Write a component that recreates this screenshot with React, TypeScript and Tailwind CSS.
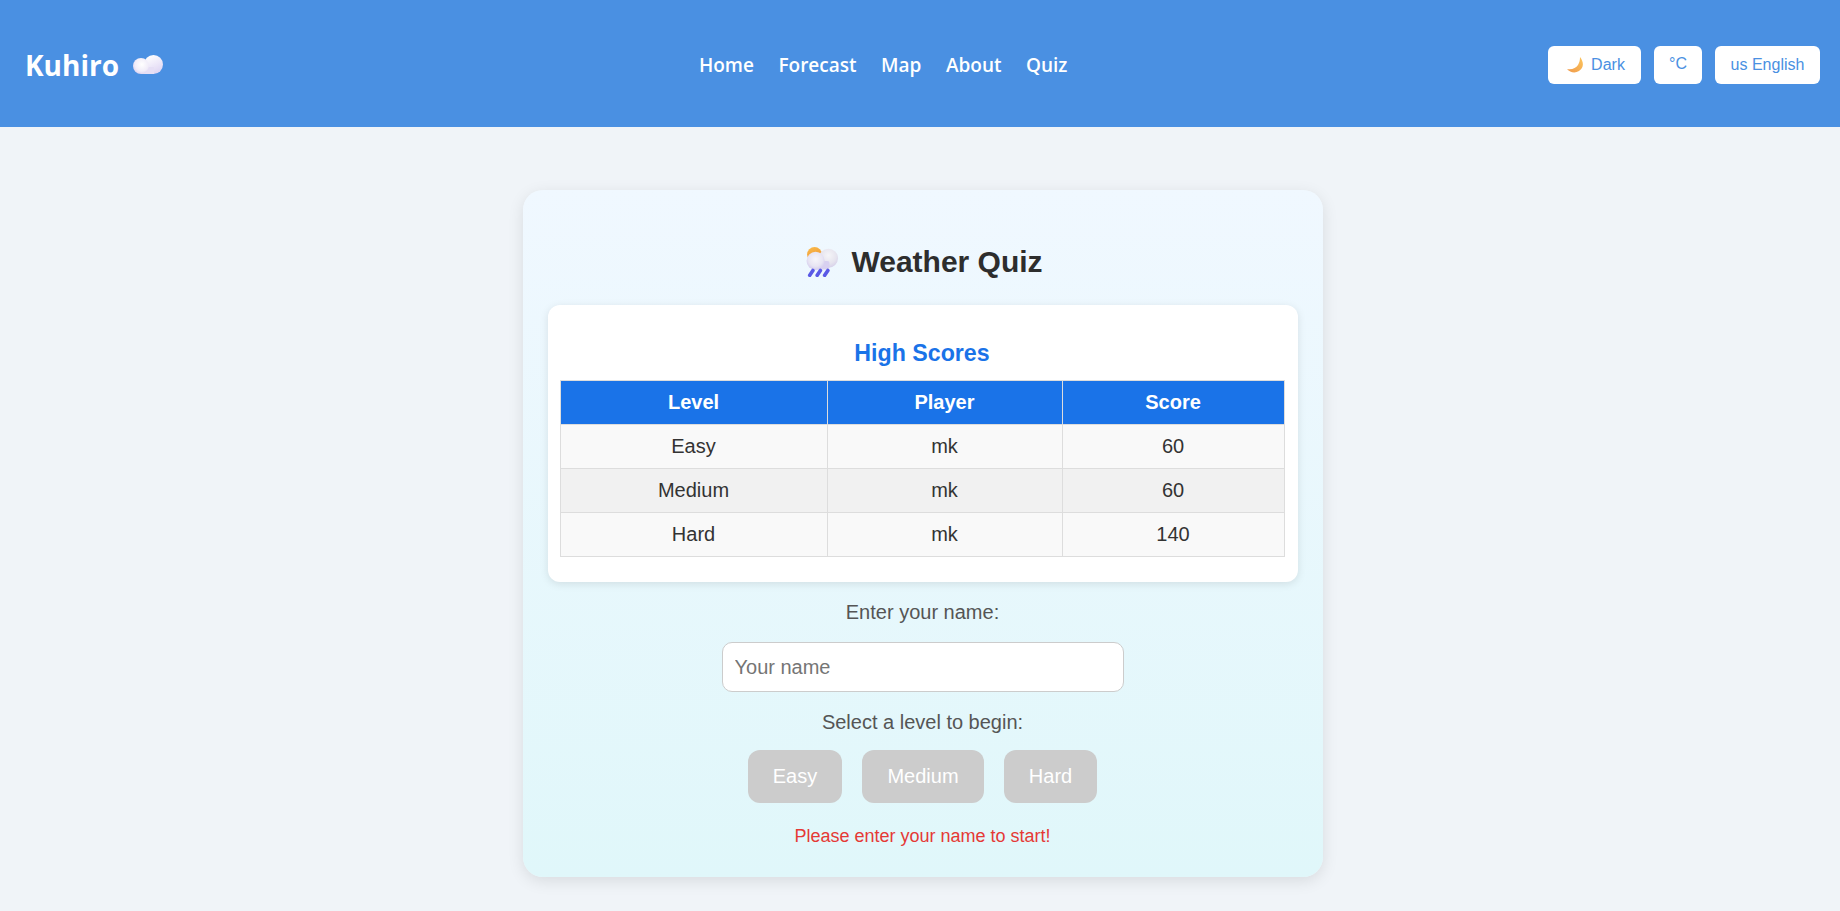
import React from "react";

function CloudLogo() {
  return (
    <svg width="30" height="19" viewBox="0 0 30 19" className="block">
      <defs>
        <radialGradient id="cl1" cx="0.55" cy="0.4" r="0.7">
          <stop offset="0" stopColor="#ffffff" />
          <stop offset="0.6" stopColor="#f1edf9" />
          <stop offset="1" stopColor="#d3c8ee" />
        </radialGradient>
        <linearGradient id="cl2" x1="0.3" y1="0" x2="0.8" y2="1">
          <stop offset="0" stopColor="#ffffff" />
          <stop offset="1" stopColor="#dcd2f2" />
        </linearGradient>
      </defs>
      <circle cx="20.5" cy="9.5" r="9.5" fill="url(#cl2)" />
      <rect x="8" y="12" width="13" height="7" fill="#e6dff5" />
      <circle cx="8" cy="11" r="8" fill="url(#cl1)" />
    </svg>
  );
}

function Moon() {
  return (
    <svg width="17" height="16" viewBox="0 0 17 16" className="block">
      <defs>
        <linearGradient id="mo" x1="1" y1="0" x2="0" y2="1">
          <stop offset="0" stopColor="#fcc55c" />
          <stop offset="1" stopColor="#f09a4c" />
        </linearGradient>
      </defs>
      <path d="M13 0 C17 5 17 11 12 14 C8 16.5 3 15.5 0 12 C5 13 9 11 11 8 C12.5 5.5 13 3 13 0 Z" fill="url(#mo)" />
    </svg>
  );
}

function RainCloud() {
  return (
    <svg width="32" height="30" viewBox="0 0 30 28" className="block">
      <defs>
        <linearGradient id="sun" x1="0.3" y1="0" x2="0.7" y2="1">
          <stop offset="0" stopColor="#f8b84a" />
          <stop offset="1" stopColor="#ef8f2c" />
        </linearGradient>
        <radialGradient id="c1" cx="0.5" cy="0.4" r="0.65">
          <stop offset="0" stopColor="#f6f5fa" />
          <stop offset="0.6" stopColor="#e8e5f3" />
          <stop offset="1" stopColor="#cfc6ec" />
        </radialGradient>
        <radialGradient id="c2" cx="0.5" cy="0.35" r="0.7">
          <stop offset="0" stopColor="#f5f5f8" />
          <stop offset="0.6" stopColor="#e6e4ee" />
          <stop offset="1" stopColor="#d2cbe8" />
        </radialGradient>
      </defs>
      <circle cx="8" cy="7" r="7" fill="url(#sun)" />
      <circle cx="21" cy="10.5" r="9" fill="url(#c2)" />
      <rect x="9" y="13" width="13" height="8" rx="2" fill="#d8d0f0" />
      <circle cx="9" cy="13" r="8.5" fill="url(#c1)" />
      <path d="M6.5 22 L3.5 26.5 M13.5 22 L10.5 26.5 M20.5 22 L17.5 26.5" stroke="#5a5ae6" strokeWidth="3.4" strokeLinecap="round" />
    </svg>
  );
}

const rows = [
  ["Easy", "mk", "60"],
  ["Medium", "mk", "60"],
  ["Hard", "mk", "140"],
];

export default function App() {
  return (
    <div className="min-h-[911px] bg-[#f0f4f8] font-['Liberation_Sans',Arial,sans-serif] overflow-hidden">
      <header className="h-[127px] bg-[#4a90e2] flex items-center pl-[25px] pr-[20px] pt-[2px]">
        <div className="flex items-center gap-[14px] text-white font-['Open_Sans',sans-serif] font-bold text-[28px] w-[674px] shrink-0">
          <span>Kuhiro</span>
          <CloudLogo />
        </div>
        <nav className="flex gap-[24.5px] text-white font-['Open_Sans',sans-serif] font-semibold text-[19px] pt-[2px]">
          <span>Home</span>
          <span>Forecast</span>
          <span>Map</span>
          <span>About</span>
          <span>Quiz</span>
        </nav>
        <div className="ml-auto flex items-center gap-[13px] text-[#4a90e2] text-[16px]">
          <button className="h-[38px] w-[93px] bg-white rounded-[6px] flex items-center justify-center gap-[7px] pl-[3px] pt-[1px]">
            <Moon />
            <span>Dark</span>
          </button>
          <button className="h-[38px] w-[48px] bg-white rounded-[6px] pb-[1px]">°C</button>
          <button className="h-[38px] w-[105px] bg-white rounded-[6px]">us English</button>
        </div>
      </header>

      <main className="flex justify-center pl-[5px] pt-[63px] pb-[34px]">
        <section className="w-[800px] h-[687px] rounded-[20px] bg-gradient-to-b from-[#f0f8ff] to-[#e0f7fa] shadow-[0_4px_16px_rgba(0,0,0,0.1)] px-[25px] pt-[53px] flex flex-col items-center">
          <h1 className="flex items-center justify-center gap-[13px] ml-[4px] text-[#2d2d2d] font-bold text-[30px] leading-[38px]">
            <RainCloud />
            <span>Weather Quiz</span>
          </h1>
          <div className="w-[750px] h-[277px] mt-[24px] bg-white rounded-[12px] shadow-[0_2px_8px_rgba(0,0,0,0.1)] pl-[12px] pr-[13px] pt-[35px] shrink-0">
            <h2 className="text-center text-[#1a73e8] font-bold text-[23.2px] leading-[26px]">High Scores</h2>
            <table className="mt-[14px] w-[725px] border-collapse table-fixed text-[20px] text-[#333333]">
              <colgroup>
                <col className="w-[267px]" />
                <col className="w-[235px]" />
                <col className="w-[222px]" />
              </colgroup>
              <thead>
                <tr className="h-[44px] bg-[#1a73e8] text-white font-bold">
                  <th className="border border-[#dddddd] pb-[2px]">Level</th>
                  <th className="border border-[#dddddd] pb-[2px]">Player</th>
                  <th className="border border-[#dddddd] pb-[2px]">Score</th>
                </tr>
              </thead>
              <tbody>
                {rows.map((r, i) => (
                  <tr key={i} className={i === 1 ? "h-[44px] bg-[#f1f1f1]" : "h-[44px] bg-[#f9f9f9]"}>
                    {r.map((c, j) => (
                      <td key={j} className="border border-[#dddddd] text-center pb-[2px]">{c}</td>
                    ))}
                  </tr>
                ))}
              </tbody>
            </table>
          </div>
          <p className="mt-[19px] text-[#555555] text-[20px] leading-[23px]">Enter your name:</p>
          <input
            placeholder="Your name"
            className="mt-[18px] w-[402px] h-[50px] shrink-0 bg-white border border-[#cccccc] rounded-[10px] px-[12px] text-[20px] placeholder:text-[#757575] outline-none"
          />
          <p className="mt-[19px] text-[#555555] text-[20px] leading-[23px]">Select a level to begin:</p>
          <div className="mt-[16px] flex gap-[20px]">
            <button className="h-[53px] w-[94px] rounded-[12px] bg-[#cccccc] text-white text-[20px] pb-[2px]">Easy</button>
            <button className="h-[53px] w-[122px] rounded-[12px] bg-[#cccccc] text-white text-[20px] pb-[2px]">Medium</button>
            <button className="h-[53px] w-[93px] rounded-[12px] bg-[#cccccc] text-white text-[20px] pb-[2px]">Hard</button>
          </div>
          <p className="mt-[22px] text-[#e53935] text-[18px] leading-[22px]">Please enter your name to start!</p>
        </section>
      </main>
    </div>
  );
}
